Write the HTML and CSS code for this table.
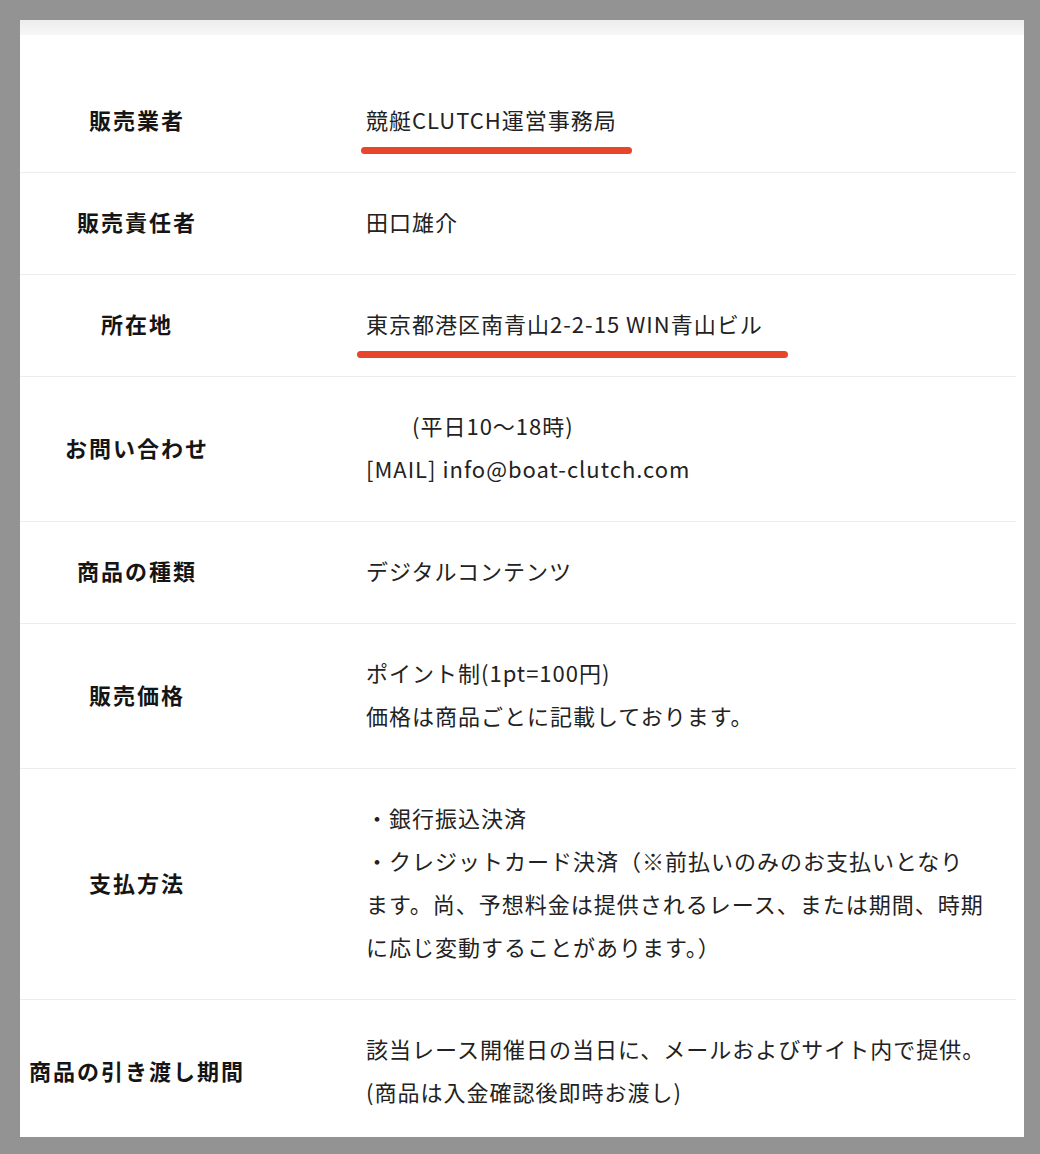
FILE: index.html
```html
<!DOCTYPE html>
<html lang="ja">
<head>
    <meta charset="UTF-8">
    <meta name="viewport" content="width=device-width, initial-scale=1.0">
    <title>特定商取引法に基づく表記</title>
    <link rel="stylesheet" href="styles.css">
</head>
<body>
    <div class="sheet">
        <div class="sheet-top"></div>
        <dl class="law-table">
            <div class="law-row">
                <dt>販売業者</dt>
                <dd><span class="marked marked-short">競艇CLUTCH運営事務局</span></dd>
            </div>
            <div class="law-row">
                <dt>販売責任者</dt>
                <dd>田口雄介</dd>
            </div>
            <div class="law-row">
                <dt>所在地</dt>
                <dd><span class="marked marked-long">東京都港区南青山2-2-15 WIN青山ビル</span></dd>
            </div>
            <div class="law-row">
                <dt>お問い合わせ</dt>
                <dd>　　(平日10〜18時)<br>[MAIL] info@boat-clutch.com</dd>
            </div>
            <div class="law-row">
                <dt>商品の種類</dt>
                <dd>デジタルコンテンツ</dd>
            </div>
            <div class="law-row">
                <dt>販売価格</dt>
                <dd>ポイント制(1pt=100円)<br>価格は商品ごとに記載しております。</dd>
            </div>
            <div class="law-row">
                <dt>支払方法</dt>
                <dd>・銀行振込決済<br>・クレジットカード決済（※前払いのみのお支払いとなり<br>ます。尚、予想料金は提供されるレース、または期間、時期<br>に応じ変動することがあります。）</dd>
            </div>
            <div class="law-row">
                <dt>商品の引き渡し期間</dt>
                <dd>該当レース開催日の当日に、メールおよびサイト内で提供。<br>(商品は入金確認後即時お渡し)</dd>
            </div>
        </dl>
    </div>
</body>
</html>
```

FILE: styles.css
```css
html, body {
    margin: 0;
    padding: 0;
}
body {
    background-color: #939393;
    font-family: "Noto Sans CJK JP", "Noto Sans", sans-serif;
    color: #222222;
    height: 1154px;
    overflow: hidden;
    padding: 20px 16px 0 20px;
    box-sizing: border-box;
}
.sheet {
    background-color: #ffffff;
    height: 1117px;
    overflow: hidden;
    padding-right: 8px;
}
.sheet-top {
    height: 15px;
    background: linear-gradient(#ececec, #f7f7f7);
    margin-right: -8px;
}
.law-table {
    margin: 36px 0 0 0;
    padding: 0;
}
.law-row {
    display: grid;
    grid-template-columns: 232px 1fr;
    align-items: center;
    border-bottom: 1px solid #ececec;
}
.law-row dt {
    text-align: center;
    font-weight: bold;
    font-size: 22px;
    letter-spacing: 2px;
    padding: 0 0 5px 2px;
    color: #151515;
}
.law-row dd {
    margin: 0;
    padding: 27px 20px 31px 114px;
    font-size: 22px;
    line-height: 43px;
    letter-spacing: 1px;
    white-space: nowrap;
}
.marked {
    position: relative;
    display: inline-block;
}
.marked::after {
    content: "";
    position: absolute;
    left: -5px;
    top: calc(100% + 6px);
    height: 7px;
    border-radius: 4px;
    background-color: #e8462b;
}
.marked-short::after {
    right: -15px;
}
.marked-long::after {
    left: -9px;
    right: -25px;
}
```
